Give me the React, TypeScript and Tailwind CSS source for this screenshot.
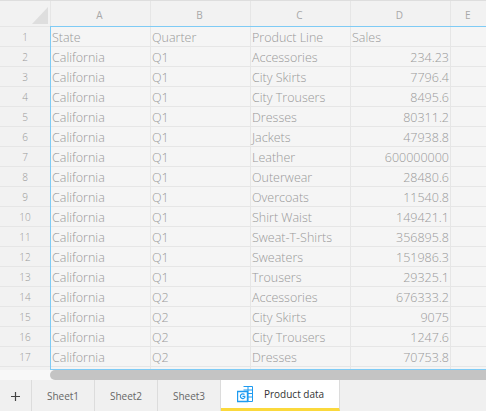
const rows: [string, string, string, string][] = [
  ['California', 'Q1', 'Accessories', '234.23'],
  ['California', 'Q1', 'City Skirts', '7796.4'],
  ['California', 'Q1', 'City Trousers', '8495.6'],
  ['California', 'Q1', 'Dresses', '80311.2'],
  ['California', 'Q1', 'Jackets', '47938.8'],
  ['California', 'Q1', 'Leather', '600000000'],
  ['California', 'Q1', 'Outerwear', '28480.6'],
  ['California', 'Q1', 'Overcoats', '11540.8'],
  ['California', 'Q1', 'Shirt Waist', '149421.1'],
  ['California', 'Q1', 'Sweat-T-Shirts', '356895.8'],
  ['California', 'Q1', 'Sweaters', '151986.3'],
  ['California', 'Q1', 'Trousers', '29325.1'],
  ['California', 'Q2', 'Accessories', '676333.2'],
  ['California', 'Q2', 'City Skirts', '9075'],
  ['California', 'Q2', 'City Trousers', '1247.6'],
  ['California', 'Q2', 'Dresses', '70753.8'],
];

function HeaderCell({ label }: { label: string }) {
  return (
    <div className="w-[100px] shrink-0 flex items-center justify-center pt-[3px] pr-[2px] border-r border-[#e6e6e6] text-[10px] text-[#a8a8a8]">
      {label}
    </div>
  );
}

function Row({ num, cells }: { num?: number; cells: [string, string, string, string] }) {
  return (
    <div className="flex h-5 shrink-0 border-b border-[#e6e6e6] text-[12.5px] font-light text-[#999999]">
      <div className="w-[51px] shrink-0 flex items-center justify-center pt-[2px] bg-[#f2f2f2] border-r border-[#e6e6e6] text-[10px]">{num}</div>
      <div className="w-[100px] shrink-0 flex items-center pl-[1px] pt-[3px] border-r border-[#e6e6e6]">{cells[0]}</div>
      <div className="w-[100px] shrink-0 flex items-center pl-[1px] pt-[3px] border-r border-[#e6e6e6]">{cells[1]}</div>
      <div className="w-[100px] shrink-0 flex items-center pl-[1px] pt-[3px] border-r border-[#e6e6e6] whitespace-nowrap">{cells[2]}</div>
      <div className={`w-[100px] shrink-0 flex items-center pt-[3px] border-r border-[#e6e6e6] ${num === 1 ? 'justify-start pl-[1px]' : 'justify-end pr-[1px]'}`}>{cells[3]}</div>
      <div className="flex-1" />
    </div>
  );
}

function SheetTab({ label }: { label: string }) {
  return (
    <div className="w-[63px] shrink-0 flex items-center justify-center pt-[2px] border-r border-[#dcdcdc] text-[10px] text-[#666666]">
      {label}
    </div>
  );
}

export default function App() {
  return (
    <div className="w-[486px] h-[411px] overflow-hidden flex flex-col bg-[#f5f5f5] font-['Open_Sans',sans-serif]">
      {/* grid */}
      <div className="relative h-[380px] shrink-0 overflow-hidden border-t border-[#dedede]">
        <div className="flex h-[26px] bg-[#f2f2f2] border-b border-[#e6e6e6]">
          <div className="relative w-[51px] shrink-0 border-r border-[#e6e6e6]">
            <div className="absolute right-[2px] bottom-[2px] w-0 h-0 border-l-[16px] border-b-[17px] border-l-transparent border-b-[#dedede]" />
          </div>
          <HeaderCell label="A" />
          <HeaderCell label="B" />
          <HeaderCell label="C" />
          <HeaderCell label="D" />
          <div className="flex-1 pl-[14px] pt-[3px] flex items-center text-[10px] text-[#a8a8a8]">E</div>
        </div>
        <Row num={1} cells={['State', 'Quarter', 'Product Line', 'Sales']} />
        {rows.map((r, i) => (
          <Row key={i} num={i + 2} cells={r} />
        ))}
        <Row cells={['', '', '', '']} />
        {/* selection outline */}
        <div className="absolute left-[50px] top-[25px] w-[440px] h-[344px] border border-[#7fcbf5] pointer-events-none" />
        {/* scrollbar */}
        <div className="absolute left-0 right-0 bottom-0 h-[10px] bg-[#f8f8f8]">
          <div className="absolute left-[50px] right-0 top-0 h-[10px] rounded-l-[5px] bg-[#c4c4c4]" />
        </div>
      </div>
      {/* sheet tabs */}
      <div className="flex flex-1 bg-[#f0f0f0]">
        <div className="w-[32px] shrink-0 flex items-center justify-center pt-[2px] border-r border-[#dcdcdc]">
          <svg width="11" height="11" viewBox="0 0 11 11"><path d="M5.500 1v9M1 5.500h9" stroke="#444444" strokeWidth="1.2" /></svg>
        </div>
        <SheetTab label="Sheet1" />
        <SheetTab label="Sheet2" />
        <SheetTab label="Sheet3" />
        <div className="w-[119px] shrink-0 flex items-center gap-[11px] pl-[16px] bg-white border-r border-[#dcdcdc] border-b-[3px] border-b-[#fbd93c] text-[10px] text-[#333333]">
          <svg width="16" height="17" viewBox="0 0 16 17" fill="none" stroke="#1e9bf0">
            <path d="M6.500 .5h9v15h-9M11 .5v15M6.500 4h9M6.500 7.500h9M6.500 11h9" />
            <path d="M.5 5.500h10v10H.5z" fill="#ffffff" strokeWidth="1.4" />
            <path d="M7.500 8.500a2.400 2.400 0 1 0 .3 3V10.300H5.500" strokeWidth="1.2" />
          </svg>
          Product data
        </div>
      </div>
    </div>
  );
}
